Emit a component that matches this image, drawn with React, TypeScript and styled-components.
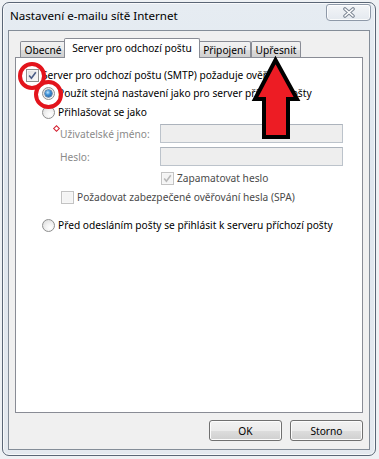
import styled, { createGlobalStyle } from "styled-components";

const GlobalStyle = createGlobalStyle`
  body {
    margin: 0;
    background: #eef1f4;
    font-family: "Noto Sans", "Liberation Sans", sans-serif;
    font-size: 10.2px;
    color: #1a1a1a;
  }
`;

const Stage = styled.div`
  position: relative;
  width: 379px;
  height: 459px;
  overflow: hidden;
  padding: 2px 0 0 2px;
  box-sizing: border-box;
`;

const Window = styled.div`
  width: 374px;
  height: 454px;
  box-sizing: border-box;
  border: 1px solid #5a6676;
  border-radius: 7px;
  background: linear-gradient(180deg, #e6ecf2 0%, #dfe6ee 40%, #e4e9ef 100%);
  box-shadow: inset 0 0 0 1px rgba(255, 255, 255, 0.7);
  display: flex;
  flex-direction: column;
`;

const TitleBar = styled.div`
  height: 27px;
  display: flex;
  align-items: flex-start;
  padding: 0 4px 0 7px;
`;

const Title = styled.div`
  margin-top: 5px;
  line-height: 16px;
  font-size: 11.6px;
  color: #000;
`;

const CloseButton = styled.div`
  margin-left: auto;
  margin-top: 1px;
  width: 45px;
  height: 17px;
  box-sizing: border-box;
  border: 1px solid #8e99a8;
  border-radius: 3px 3px 4px 4px;
  background: linear-gradient(180deg, #f3f5f8 0%, #e4e9ef 100%);
  box-shadow: inset 0 0 0 1px rgba(255, 255, 255, 0.8);
  display: flex;
  align-items: center;
  justify-content: center;
`;

const Client = styled.div`
  flex: 1;
  margin: 0 5px 5px 5px;
  border: 1px solid #848d98;
  background: #f0f0f0;
  padding: 7px 6px 8px 6px;
  display: flex;
  flex-direction: column;
`;

const TabRow = styled.div`
  position: relative;
  z-index: 1;
  height: 20px;
  margin-bottom: -1px;
  padding-left: 5px;
  display: flex;
  align-items: flex-end;
`;

const Tab = styled.div<{ $active?: boolean; $w: number }>`
  box-sizing: border-box;
  width: ${(p) => p.$w}px;
  height: ${(p) => (p.$active ? 20 : 16)}px;
  margin: ${(p) => (p.$active ? "0 -2px" : "0 0 1px 0")};
  position: relative;
  z-index: ${(p) => (p.$active ? 2 : 1)};
  border: 1px solid #898c95;
  border-bottom: none;
  border-radius: 2px 2px 0 0;
  background: ${(p) =>
    p.$active
      ? "#ffffff"
      : "linear-gradient(180deg, #f2f2f2 0%, #ebebeb 50%, #dddddd 51%, #cfcfcf 100%)"};
  display: flex;
  align-items: center;
  justify-content: center;
  padding-bottom: ${(p) => (p.$active ? 2 : 0)}px;
  white-space: nowrap;
  color: #000;
`;

const Panel = styled.div`
  height: 356px;
  box-sizing: border-box;
  border: 1px solid #898c95;
  background: #fff;
  padding: 8px 0 0 10px;
  display: flex;
  flex-direction: column;
`;

const Row = styled.div<{ $indent?: number; $top?: number; $muted?: boolean }>`
  height: 18px;
  display: flex;
  align-items: center;
  gap: 3px;
  margin-left: ${(p) => p.$indent ?? 0}px;
  margin-top: ${(p) => p.$top ?? 0}px;
  color: ${(p) => (p.$muted ? "#4a4a4a" : "#000")};
  white-space: nowrap;
`;

const Box = styled.span<{ $disabled?: boolean }>`
  width: 13px;
  height: 13px;
  box-sizing: border-box;
  flex: none;
  border: 1px solid ${(p) => (p.$disabled ? "#c3c3c3" : "#8e8f8f")};
  background: ${(p) =>
    p.$disabled
      ? "#f4f4f4"
      : "linear-gradient(135deg, #dcdcdc 0%, #f0f0f0 60%, #fbfbfb 100%)"};
  box-shadow: inset 0 0 0 1px ${(p) => (p.$disabled ? "#f7f7f7" : "#f4f4f4")};
  display: flex;
  align-items: center;
  justify-content: center;
`;

const Radio = styled.span<{ $checked?: boolean }>`
  width: 13px;
  height: 13px;
  box-sizing: border-box;
  flex: none;
  border-radius: 50%;
  border: 1px solid #8e8f8f;
  background: radial-gradient(circle at 65% 70%, #ffffff 0%, #f2f2f2 40%, #d8d8d8 100%);
  display: flex;
  align-items: center;
  justify-content: center;

  &::after {
    content: "";
    display: ${(p) => (p.$checked ? "block" : "none")};
    width: 7px;
    height: 7px;
    border-radius: 50%;
    background: radial-gradient(circle at 40% 35%, #bfe6ff 0%, #3c8fd6 40%, #15508f 100%);
    box-shadow: 0 0 0 0.5px #0f3e72;
  }
`;

const Creds = styled.div`
  margin: 3px 0 0 34px;
  display: grid;
  grid-template-columns: 100px 183px;
  grid-auto-rows: 19px;
  row-gap: 4px;
  align-items: center;
`;

const Label = styled.span`
  position: relative;
  color: #8a8a8a;
  white-space: nowrap;
`;

const Required = styled.span`
  position: absolute;
  left: -6px;
  top: -1px;
  width: 3px;
  height: 3px;
  border: 1px solid #d42030;
  transform: rotate(45deg);
`;

const Field = styled.div`
  height: 19px;
  box-sizing: border-box;
  border: 1px solid #bcc3cb;
  border-top-color: #acb3bc;
  background: #eeeeee;
`;

const Buttons = styled.div`
  margin-top: 7px;
  display: flex;
  justify-content: flex-end;
  gap: 8px;
`;

const Button = styled.div`
  width: 73px;
  height: 21px;
  box-sizing: border-box;
  border: 1px solid #707070;
  border-radius: 3px;
  background: linear-gradient(180deg, #f2f2f2 0%, #ebebeb 50%, #dddddd 51%, #cfcfcf 100%);
  box-shadow: inset 0 0 0 1px #fcfcfc;
  display: flex;
  align-items: center;
  justify-content: center;
  color: #000;
`;

const Ring = styled.div<{ $x: number; $y: number; $d: number }>`
  position: absolute;
  left: ${(p) => p.$x}px;
  top: ${(p) => p.$y}px;
  width: ${(p) => p.$d}px;
  height: ${(p) => p.$d}px;
  box-sizing: border-box;
  border: 4px solid #e3141c;
  border-radius: 50%;
  z-index: 5;
`;

const Arrow = styled.svg`
  position: absolute;
  left: 245px;
  top: 48px;
  z-index: 5;
`;

function Check({ checked, disabled }: { checked?: boolean; disabled?: boolean }) {
  return (
    <Box $disabled={disabled}>
      {checked && (
        <svg width="9" height="9" viewBox="0 0 9 9">
          <path
            d="M1.2 4.6 L3.4 7.2 L7.8 1.2"
            fill="none"
            stroke={disabled ? "#b8b8b8" : "#4a5c86"}
            strokeWidth="1.6"
          />
        </svg>
      )}
    </Box>
  );
}

export default function App() {
  return (
    <Stage>
      <GlobalStyle />
      <Window>
        <TitleBar>
          <Title>Nastavení e-mailu sítě Internet</Title>
          <CloseButton>
            <svg width="14" height="11" viewBox="0 0 14 11">
              <path d="M3 2 L11 9 M11 2 L3 9" stroke="#7c8694" strokeWidth="3.6" strokeLinecap="round" />
              <path d="M3 2 L11 9 M11 2 L3 9" stroke="#ffffff" strokeWidth="1.6" strokeLinecap="round" />
            </svg>
          </CloseButton>
        </TitleBar>
        <Client>
          <TabRow>
            <Tab $w={46}>Obecné</Tab>
            <Tab $w={136} $active>
              Server pro odchozí poštu
            </Tab>
            <Tab $w={53}>Připojení</Tab>
            <Tab $w={50}>Upřesnit</Tab>
          </TabRow>
          <Panel>
            <Row>
              <Check checked />
              Server pro odchozí poštu (SMTP) požaduje ověření
            </Row>
            <Row $indent={16}>
              <Radio $checked />
              Použít stejná nastavení jako pro server příchozí pošty
            </Row>
            <Row $indent={16} $top={1}>
              <Radio />
              Přihlašovat se jako
            </Row>
            <Creds>
              <Label>
                <Required />
                Uživatelské jméno:
              </Label>
              <Field />
              <Label>Heslo:</Label>
              <Field />
            </Creds>
            <Row $indent={135} $top={3} $muted>
              <Check checked disabled />
              Zapamatovat heslo
            </Row>
            <Row $indent={35} $top={1} $muted>
              <Check disabled />
              Požadovat zabezpečené ověřování hesla (SPA)
            </Row>
            <Row $indent={16} $top={10}>
              <Radio />
              Před odesláním pošty se přihlásit k serveru příchozí pošty
            </Row>
          </Panel>
          <Buttons>
            <Button>OK</Button>
            <Button>Storno</Button>
          </Buttons>
        </Client>
      </Window>
      <Ring $x={18} $y={62} $d={28} />
      <Ring $x={34} $y={80} $d={29} />
      <Arrow width="60" height="96" viewBox="0 0 60 96">
        <polygon
          points="30.5,12 10,51 19,51 19,89 43,89 43,51 52,51"
          fill="#ed1c24"
          stroke="#000"
          strokeWidth="4"
          strokeLinejoin="miter"
          strokeMiterlimit="3"
        />
      </Arrow>
    </Stage>
  );
}
